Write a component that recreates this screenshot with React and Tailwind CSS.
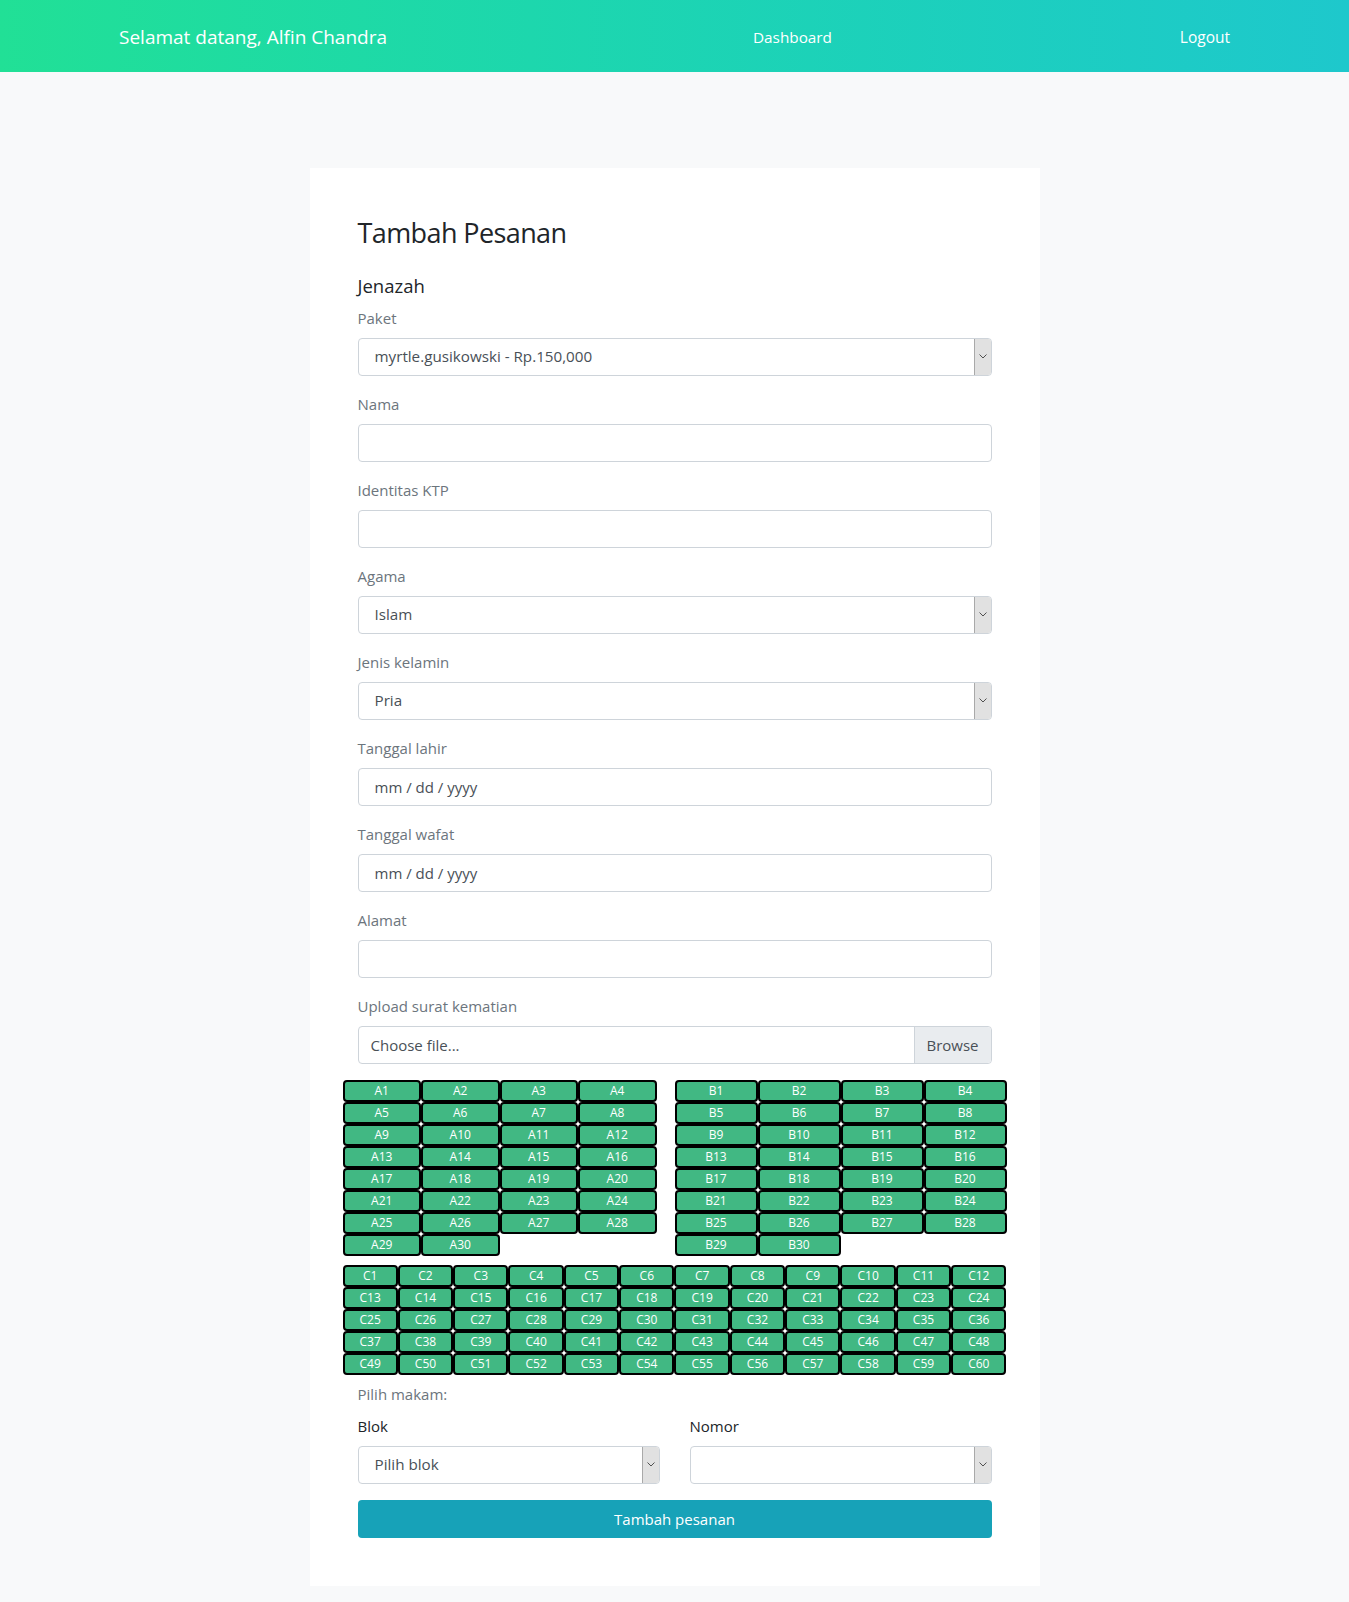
import React from "react";

const paket = "myrtle.gusikowski - Rp.150,000";

function Chevron() {
  return (
    <svg width="8" height="5" viewBox="0 0 8 5" fill="none">
      <path d="M0.5 0.5 L4 4 L7.5 0.5" stroke="#505050" strokeWidth="1" />
    </svg>
  );
}

function Select({ value }) {
  return (
    <div className="flex h-[38px] items-stretch rounded-[4px] border border-[#ced4da] bg-white">
      <span className="flex flex-1 items-center pl-4 text-[15.2px] text-[#495057]">{value}</span>
      <div className="flex w-[17px] items-center justify-center rounded-r-[3px] border-l border-[#a9a9a9] bg-[#e1e1e1]">
        <Chevron />
      </div>
    </div>
  );
}

function Input({ placeholder }) {
  return (
    <div className="flex h-[38px] items-center rounded-[4px] border border-[#ced4da] bg-white pl-4 text-[15px] text-[#495057]">
      {placeholder}
    </div>
  );
}

function Group({ label, children }) {
  return (
    <div className="mb-4">
      <label className="mb-2 block text-[15px] leading-6 text-[#6c757d]">{label}</label>
      {children}
    </div>
  );
}

function Seat({ label }) {
  return (
    <div className="h-[22px] rounded-[4px] border-2 border-black bg-[#41b883] text-center text-[12px] leading-[18px] text-white">
      {label}
    </div>
  );
}

const range = (prefix, n) => Array.from({ length: n }, (_, i) => `${prefix}${i + 1}`);

export default function App() {
  return (
    <div className="min-h-[1602px] bg-[#f8f9fa] font-['Open_Sans',sans-serif] text-[#212529]">
      {/* Navbar */}
      <nav className="h-[72px] bg-gradient-to-r from-[#21e096] to-[#1ec8cc]">
        <div className="mx-auto flex h-full w-[1111px] items-center pt-[3px] text-white">
          <div className="w-[634px] text-[19px]">Selamat datang, Alfin Chandra</div>
          <div className="text-[15.3px]">Dashboard</div>
          <div className="ml-auto text-[15.5px]">Logout</div>
        </div>
      </nav>

      {/* Card */}
      <div className="mx-auto mb-4 mt-[96px] w-[730px] bg-white p-12">
        <h3 className="mb-6 text-[27px] leading-[1.25] tracking-[-0.6px]">Tambah Pesanan</h3>
        <h5 className="mb-2 text-[18.5px] leading-6">Jenazah</h5>

        <Group label="Paket">
          <Select value={paket} />
        </Group>
        <Group label="Nama">
          <Input />
        </Group>
        <Group label="Identitas KTP">
          <Input />
        </Group>
        <Group label="Agama">
          <Select value="Islam" />
        </Group>
        <Group label="Jenis kelamin">
          <Select value="Pria" />
        </Group>
        <Group label="Tanggal lahir">
          <Input placeholder="mm / dd / yyyy" />
        </Group>
        <Group label="Tanggal wafat">
          <Input placeholder="mm / dd / yyyy" />
        </Group>
        <Group label="Alamat">
          <Input />
        </Group>
        <Group label="Upload surat kematian">
          <div className="flex h-[38px] items-stretch rounded-[4px] border border-[#ced4da] bg-white text-[15px] text-[#495057]">
            <span className="flex flex-1 items-center pl-3">Choose file...</span>
            <span className="flex w-[77px] items-center justify-center rounded-r-[4px] border-l border-[#ced4da] bg-[#e9ecef]">
              Browse
            </span>
          </div>
        </Group>

        {/* Denah makam */}
        <div className="-mx-[15px]">
          <div className="flex items-start">
            <div className="grid w-[314px] grid-cols-4">
              {range("A", 30).map((s) => (
                <Seat key={s} label={s} />
              ))}
            </div>
            <div className="ml-[18px] grid flex-1 grid-cols-4">
              {range("B", 30).map((s) => (
                <Seat key={s} label={s} />
              ))}
            </div>
          </div>
          <div className="mt-[9px] grid grid-cols-12">
            {range("C", 60).map((s) => (
              <Seat key={s} label={s} />
            ))}
          </div>
        </div>

        <p className="mb-2 mt-[7px] text-[15px] leading-6 text-[#6c757d]">Pilih makam:</p>
        <div className="grid grid-cols-2 gap-[30px]">
          <div>
            <label className="mb-2 block text-[15px] leading-6">Blok</label>
            <Select value="Pilih blok" />
          </div>
          <div>
            <label className="mb-2 block text-[15px] leading-6">Nomor</label>
            <Select value="" />
          </div>
        </div>

        <button className="mt-4 h-[38px] w-full rounded-[4px] bg-[#17a2b8] text-[15px] text-white">
          Tambah pesanan
        </button>
      </div>
    </div>
  );
}
